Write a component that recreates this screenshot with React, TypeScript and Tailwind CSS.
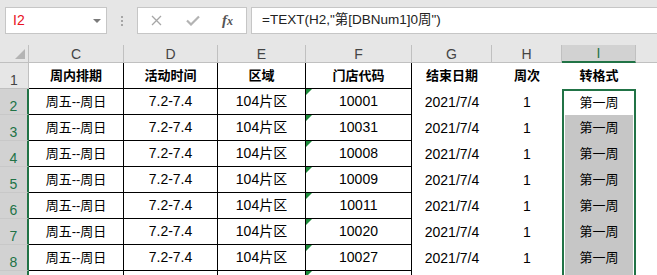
const GREEN = "#217346";

const header = ["周内排期", "活动时间", "区域", "门店代码", "结束日期", "周次", "转格式"];

const codes = ["10001", "10031", "10008", "10009", "10011", "10020", "10027", ""];

const rows = codes.map((code) =>
  code ? ["周五--周日", "7.2-7.4", "104片区", code, "2021/7/4", "1", "第一周"] : ["", "", "", "", "", "", ""]
);

function ErrorMark() {
  return (
    <svg className="absolute left-0 top-0" width="6" height="6" viewBox="0 0 6 6">
      <polygon points="0,0 6,0 0,6" fill="#1c8a3a" />
    </svg>
  );
}

function Toolbar() {
  return (
    <div className="flex h-[45px] items-start bg-[#e6e6e6] pl-[5px] pt-[7px]">
      {/* name box */}
      <div className="relative flex h-[27px] w-[102px] items-center border border-[#c6c6c6] bg-white pl-[7px] text-[14px] text-[#e81123]">
        I2
        <svg className="absolute right-[5px] top-[11px]" width="8" height="4" viewBox="0 0 8 4">
          <polygon points="0,0 8,0 4,4" fill="#7a7a7a" />
        </svg>
      </div>

      <div className="flex h-[27px] w-[30px] flex-col items-center justify-center gap-[2px]">
        <div className="h-[2px] w-[2px] bg-[#a6a6a6]" />
        <div className="h-[2px] w-[2px] bg-[#a6a6a6]" />
        <div className="h-[2px] w-[2px] bg-[#a6a6a6]" />
      </div>

      {/* cancel / enter / fx */}
      <div className="flex h-[27px] w-[110px] items-center border border-[#c6c6c6] bg-white">
        <svg className="ml-[13px]" width="11" height="11" viewBox="0 0 11 11">
          <path d="M1 1 L10 10 M10 1 L1 10" stroke="#a6a6a6" strokeWidth="1.3" fill="none" />
        </svg>
        <svg className="ml-[24px]" width="14" height="11" viewBox="0 0 14 11">
          <path d="M1 5.5 L5 9.5 L13 1.5" stroke="#b3b3b3" strokeWidth="2.2" fill="none" />
        </svg>
        <span className="ml-[22px] font-['Liberation_Serif',serif] text-[15px] font-bold italic leading-none text-[#555]">
          f<span className="text-[12px]">x</span>
        </span>
      </div>

      {/* formula */}
      <div className="ml-[4px] mr-[-2px] flex h-[27px] flex-1 items-center border border-[#c6c6c6] bg-white pl-[10px] text-[13.5px] text-[#222]">
        =TEXT(H2,"第[DBNum1]0周")
      </div>
    </div>
  );
}

export default function App() {
  const letters = ["C", "D", "E", "F", "G", "H", "I"];
  return (
    <div className="h-[275px] w-[657px] overflow-hidden bg-white font-['Liberation_Sans','Noto_Sans_CJK_SC',sans-serif] text-black">
      <Toolbar />

      <div className="grid grid-cols-[29px_95px_94px_88px_106px_80px_70px_74px_1fr]">
        {/* column headers */}
        <div className="relative h-[18px] border-b border-r border-[#c0c0c0] bg-[#e6e6e6]">
          <svg className="absolute bottom-[3px] right-[3px]" width="10" height="10" viewBox="0 0 10 10">
            <polygon points="10,0 10,10 0,10" fill="#b4b4b4" />
          </svg>
        </div>
        {letters.map((l) =>
          l === "I" ? (
            <div
              key={l}
              className="flex h-[18px] items-center justify-center border-b-2 border-r border-[#c0c0c0] border-b-[#217346] bg-[#d2d2d2] text-[14px] leading-none text-[#217346]"
            >
              {l}
            </div>
          ) : (
            <div
              key={l}
              className="flex h-[18px] items-center justify-center border-b border-r border-[#c0c0c0] bg-[#e6e6e6] text-[14px] leading-none text-[#444]"
            >
              {l}
            </div>
          )
        )}
        <div className="h-[18px] border-b border-[#c0c0c0] bg-[#e6e6e6]" />

        {/* row 1: table header */}
        <div className="flex h-[26px] items-end justify-center border-b border-r border-[#c0c0c0] bg-[#e6e6e6] pb-[1px] text-[14px] leading-none text-[#444]">
          1
        </div>
        {header.slice(0, 4).map((h) => (
          <div key={h} className="flex h-[26px] items-center justify-center border-b border-r border-black text-[13px] font-bold">
            {h}
          </div>
        ))}
        {header.slice(4).map((h) => (
          <div key={h} className="flex h-[26px] items-center justify-center text-[13px] font-bold">
            {h}
          </div>
        ))}
        <div className="h-[26px]" />

        {/* data rows; the last one is only a sliver at the bottom edge */}
        {rows.map((r, i) => {
          const n = i + 2;
          return [
            <div
              key={`h${n}`}
              className="flex h-[26px] items-end justify-center border-b border-r-2 border-[#c8c8c8] border-r-[#217346] bg-[#d2d2d2] pb-[1px] text-[14px] leading-none text-[#217346]"
            >
              {n < 9 ? n : null}
            </div>,
            <div key={`c${n}`} className="flex h-[26px] items-center justify-center border-b border-r border-black text-[13px]">
              {r[0]}
            </div>,
            <div key={`d${n}`} className="flex h-[26px] items-center justify-center border-b border-r border-black text-[14px]">
              {r[1]}
            </div>,
            <div key={`e${n}`} className="flex h-[26px] items-center justify-center border-b border-r border-black text-[14px]">
              {r[2]}
            </div>,
            <div key={`f${n}`} className="relative flex h-[26px] items-center justify-center border-b border-r border-black text-[14px]">
              <ErrorMark />
              {r[3]}
            </div>,
            <div key={`g${n}`} className="flex h-[26px] items-center justify-center text-[14px]">
              {r[4]}
            </div>,
            <div key={`hh${n}`} className="flex h-[26px] items-center justify-center text-[14px]">
              {r[5]}
            </div>,
            n === 2 ? (
              <div
                key={`i${n}`}
                className="flex h-[26px] items-center justify-center border-x-2 border-t-2 border-[#217346] bg-white text-[13px]"
              >
                {r[6]}
              </div>
            ) : (
              <div key={`i${n}`} className="h-[26px] border-x-2 border-[#217346] bg-white px-[1px]">
                <div className="flex h-full items-center justify-center bg-[#c6c6c6] text-[13px]">{r[6]}</div>
              </div>
            ),
            <div key={`j${n}`} className="h-[26px]" />,
          ];
        })}
      </div>
    </div>
  );
}
